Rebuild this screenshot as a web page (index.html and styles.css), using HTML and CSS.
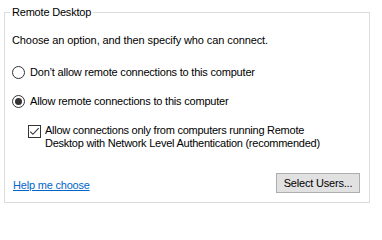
FILE: index.html
```html
<!DOCTYPE html>
<html lang="en">
<head>
<meta charset="utf-8">
<title>Remote Desktop</title>
<link rel="stylesheet" href="styles.css">
</head>
<body>
<fieldset class="group">
  <legend class="group-title">Remote Desktop</legend>
  <div class="group-body">
    <p class="intro">Choose an option, and then specify who can connect.</p>
    <label class="option option-first">
      <span class="radio"></span>
      <span class="option-text">Don’t allow remote connections to this computer</span>
    </label>
    <label class="option option-second">
      <span class="radio radio-checked"><span class="radio-dot"></span></span>
      <span class="option-text">Allow remote connections to this computer</span>
    </label>
    <label class="check">
      <svg class="checkbox" width="13" height="13" viewBox="0 0 13 13" aria-hidden="true">
        <rect x="0.5" y="0.5" width="12" height="12" fill="#fff" stroke="#333"/>
        <path d="M2.3 6.6 L4.9 9.3 L10.7 3.1" fill="none" stroke="#333" stroke-width="1.1"/>
      </svg>
      <span class="check-text">Allow connections only from computers running Remote<br>Desktop with Network Level Authentication (recommended)</span>
    </label>
    <div class="footer">
      <a class="help-link" href="#">Help me choose</a>
      <button class="btn" type="button">Select Users...</button>
    </div>
  </div>
</fieldset>
</body>
</html>
```
FILE: styles.css
```css
html, body {
  margin: 0;
  padding: 0;
  background: #ffffff;
}
body {
  padding-top: 6px;
  font-family: "Liberation Sans", Arial, sans-serif;
  font-size: 11px;
  line-height: 13px;
  letter-spacing: -0.2px;
  color: #000;
}
.group {
  box-sizing: border-box;
  width: 366px;
  margin: 0 0 0 4px;
  padding: 0;
  border: 1px solid #dcdcdc;
  min-width: 0;
}
.group-title {
  margin-left: 5px;
  padding: 0 2px;
  line-height: 13px;
}
.group-body {
  display: flex;
  flex-direction: column;
  padding: 15px 9px 9px 7px;
}
.intro {
  margin: 0;
  letter-spacing: -0.1px;
}
.option {
  display: flex;
  align-items: center;
  height: 13px;
}
.option-first {
  margin-top: 19px;
}
.option-second {
  margin-top: 16px;
}
.radio {
  box-sizing: border-box;
  width: 13px;
  height: 13px;
  border: 1px solid #333;
  border-radius: 50%;
  display: flex;
  align-items: center;
  justify-content: center;
  flex: none;
}
.radio-dot {
  width: 7px;
  height: 7px;
  border-radius: 50%;
  background: #333;
}
.option-text {
  margin-left: 5px;
}
.check {
  display: flex;
  align-items: flex-start;
  margin-top: 16px;
  padding-left: 16px;
}
.checkbox {
  flex: none;
  margin-top: 1px;
  display: block;
}
.check-text {
  margin-left: 4px;
  letter-spacing: -0.25px;
}
.footer {
  display: flex;
  justify-content: space-between;
  align-items: flex-start;
  margin-top: 23px;
  padding-left: 1px;
}
.help-link {
  color: #0066cc;
  text-decoration: underline;
  padding-top: 6px;
}
.btn {
  box-sizing: border-box;
  width: 84px;
  height: 20px;
  padding: 0;
  background: #e1e1e1;
  border: 1px solid #adadad;
  border-radius: 0;
  font-family: "Liberation Sans", Arial, sans-serif;
  font-size: 11px;
  line-height: 13px;
  letter-spacing: -0.2px;
  color: #000;
}
```
